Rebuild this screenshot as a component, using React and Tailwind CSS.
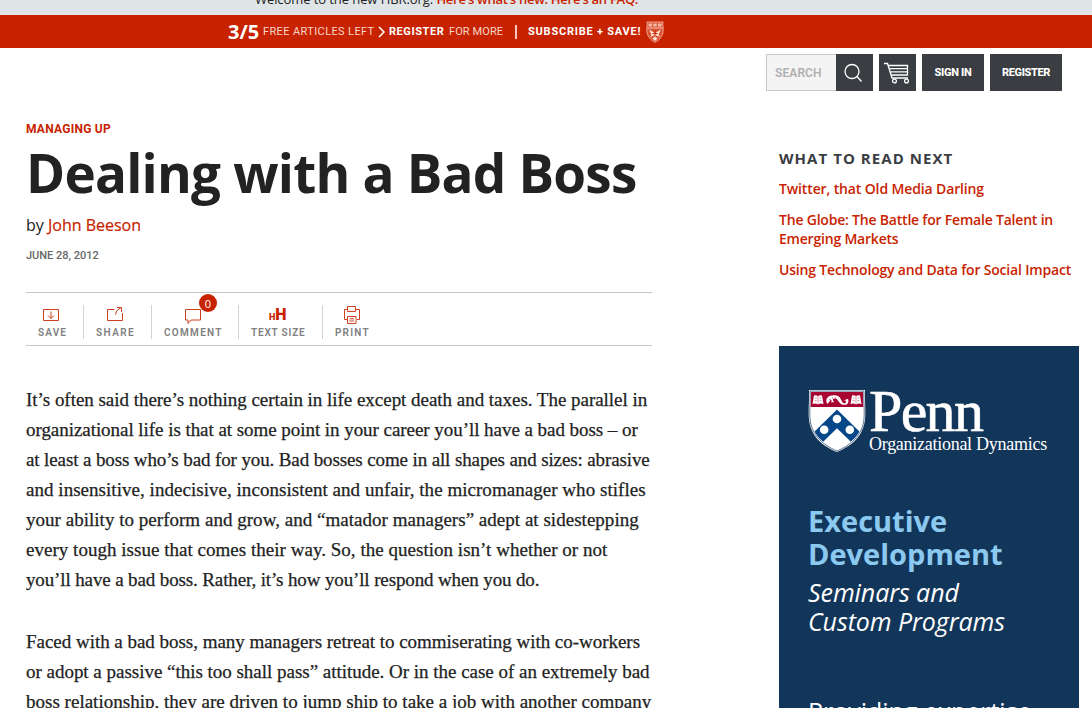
import React from "react";

const sans = "font-['Open_Sans',sans-serif]";
const label = "font-['Roboto',sans-serif]";

function Crest() {
  return (
    <svg width="18" height="22" viewBox="0 0 18 22" fill="none" className="mb-[2px] shrink-0">
      <path d="M1 1h16c-.5 3 .3 5 .2 8.500-.4 5.500-3.500 9.500-8.200 11.800C4.300 19 1.200 15 .8 9.500.7 6 1.500 4 1 1Z" fill="#d9512f" stroke="#f0a896" strokeWidth="1" />
      <path d="M2.500 2.500h3.600v3H2.500zM7.200 2.500h3.600v3H7.200zM11.900 2.500h3.600v3h-3.600z" fill="#f3b7a6" />
      <path d="M1.500 7h15" stroke="#f6c4b6" />
      <path d="M3 8.500 9 12l6-3.500-2.500 5L14 16l-5-2-5 2 1.500-2.500Z" fill="#fbe3dc" />
      <path d="m6.500 17.500 2.500-2 2.500 2L9 20Z" fill="#fbe3dc" />
      <path d="M9 9.500v5M6.500 12.500h5" stroke="#c82300" />
    </svg>
  );
}

function PennShield() {
  return (
    <svg width="58" height="64" viewBox="0 0 58 64" className="shrink-0">
      <defs>
        <clipPath id="shield">
          <path d="M3 3h52c-.3 8 .6 15 .4 23C55 44 44 54 29 61 14 54 3 44 2.600 26 2.400 18 3.300 11 3 3Z" />
        </clipPath>
      </defs>
      <path d="M1 1h56c-.4 9 .5 16 .3 25C57 45 46 56 29 63 12 56 1 45 .7 26 .5 17 1.400 10 1 1Z" fill="#fff" />
      <path d="M2.100 2.100h53.800c-.4 9 .5 16 .3 24C56 44.500 45 55 29 62 13 55 2 44.500 1.800 26 1.600 18 2.500 10 2.100 2.100Z" fill="none" stroke="#12365a" strokeWidth="0.700" />
      <g clipPath="url(#shield)">
        <path d="M0 0h58v18H0z" fill="#a90533" />
        <path d="M29 20.500 58 49v3L44 54 29 39.500 14 54 0 52V49Z" fill="#064789" />
        <path d="M0 49 8.500 41 17 51 0 64ZM58 49 49.500 41 41 51 58 64Z" fill="#064789" />
        <path d="M29 39.500 45 55 29 64 13 55Z" fill="#fff" />
      </g>
      <circle cx="29" cy="30" r="4.300" fill="#fff" />
      <circle cx="16.200" cy="40.700" r="4.300" fill="#fff" />
      <circle cx="41.800" cy="40.700" r="4.300" fill="#fff" />
      {[4.5, 42.5].map((x) => (
        <g key={x} transform={`translate(${x} 6)`}>
          <path d="M1.500 0.500Q4 0 5.500 1.200 7 0 9.500.500L11 9Q7.500 8 5.500 9.500 3.500 8 0 9Z" fill="#fff" />
          <path d="M5.500 1.500v7M2.500 3h2M2.200 5.500h2M6.800 3h2M6.900 5.500h2" stroke="#a90533" strokeWidth=".4" />
        </g>
      ))}
      <path d="M19.500 15c-3-4 0-8.500 4.500-8.500 6-1.500 8.500 2 9.500 5 1.500 4 5 3.500 4.500.5l-1.800-.8 3.800-1.500c1.500 4-1 6.800-5 6-5-1-4.500-6.500-8.500-6.200-2 .3-2 2-.5 3.500l-2.500.5-.5-3Z" fill="#fff" />
      <path d="m21 10 3 2M24 8l2 3M28 8l-1 3" stroke="#a90533" strokeWidth=".5" />
    </svg>
  );
}

const icon = { fill: "none", stroke: "#d0401f", strokeWidth: 1 };

const SaveIcon = () => (
  <svg width="18" height="20" viewBox="0 0 18 20" {...icon}>
    <path d="M1.500 4.500h15v11h-15zM9 6.500v7M6 10.500l3 3 3-3" />
  </svg>
);
const ShareIcon = () => (
  <svg width="18" height="20" viewBox="0 0 18 20" {...icon}>
    <path d="M8.500 4.500h-7v11h15V8M9.500 9.500 10.500 6l4.500-3.500M11 2.500h4.500V7" />
  </svg>
);
const CommentIcon = () => (
  <svg width="18" height="20" viewBox="0 0 18 20" {...icon}>
    <path d="M1.500 4.500h15v10.500H7l-3 3.500V15H1.500z" />
  </svg>
);
const PrintIcon = () => (
  <svg width="18" height="20" viewBox="0 0 18 20" {...icon}>
    <path d="M4.500 6.500v-5h8v5M4 14.500H1.500V4.500h3M12.500 4.500h4v10H14M4.500 6.500h8M4.500 11.500h8.500v7H4.500zM6.500 13.800h4.500M6.500 16h4.500" />
  </svg>
);

function Tool({ name, className, tracking, children }) {
  return (
    <div className={`flex h-[34px] flex-col pl-[12px] ${className}`}>
      <div className="flex w-fit flex-col items-center">
        {children}
        <span className={`${label} text-[10px] font-semibold leading-[16px] text-[#808080] ${tracking}`}>{name}</span>
      </div>
    </div>
  );
}

const paragraphs = [
  [
    ["It’s often said there’s nothing certain in life except death and taxes. The parallel in", "tracking-[-0.03px]"],
    ["organizational life is that at some point in your career you’ll have a bad boss – or", "tracking-[-0.05px]"],
    ["at least a boss who’s bad for you. Bad bosses come in all shapes and sizes: abrasive", "tracking-[-0.12px]"],
    ["and insensitive, indecisive, inconsistent and unfair, the micromanager who stifles", "tracking-[0.037px]"],
    ["your ability to perform and grow, and “matador managers” adept at sidestepping", "tracking-[0.025px]"],
    ["every tough issue that comes their way. So, the question isn’t whether or not", "tracking-[0.025px]"],
    ["you’ll have a bad boss. Rather, it’s how you’ll respond when you do.", "tracking-[-0.13px]"],
  ],
  [
    ["Faced with a bad boss, many managers retreat to commiserating with co-workers", "tracking-[-0.029px]"],
    ["or adopt a passive “this too shall pass” attitude. Or in the case of an extremely bad", "tracking-[-0.02px]"],
    ["boss relationship, they are driven to jump ship to take a job with another company", "tracking-[0.012px]"],
  ],
];

export default function App() {
  return (
    <div className={`flex h-[708px] w-[1092px] flex-col overflow-hidden bg-white text-[#222] ${sans}`}>
      <div className="flex h-[15px] shrink-0 items-end overflow-hidden bg-[#dfe4e7] pl-[255px]">
        <p className="mb-[7px] whitespace-nowrap text-[13px] font-medium leading-[18px] tracking-[-0.08px]">
          Welcome to the new HBR.org.{" "}
          <a className="font-semibold tracking-[-0.27px] text-[#c82300]">Here’s what’s new. Here’s an FAQ.</a>
        </p>
      </div>

      <div className={`flex h-[33px] shrink-0 items-center whitespace-nowrap bg-[#c82300] pl-[228px] pt-[2px] text-[11px] text-white ${label}`}>
        <span className={`${sans} mb-[2px] w-[35px] text-[20px] font-bold leading-[32px]`}>3/5</span>
        <span className="w-[115px] tracking-[0.38px] text-[#f8d5cb]">FREE ARTICLES LEFT</span>
        <svg width="8" height="12" viewBox="0 0 8 12" className="mb-[2px] mr-[3px]" fill="none" stroke="#fff" strokeWidth="1.500">
          <path d="m1 1 5 5-5 5" />
        </svg>
        <span className="w-[60px] font-bold tracking-[0.57px]">REGISTER</span>
        <span className="w-[66px] tracking-[0.1px] text-[#f8d5cb]">FOR MORE</span>
        <span className="mb-[2px] h-[14px] w-[13px] border-l-2 border-[#f5cabd]" />
        <span className="w-[118px] font-bold tracking-[0.78px]">SUBSCRIBE + SAVE!</span>
        <Crest />
      </div>

      <div className={`flex h-[43px] shrink-0 justify-end pr-[30px] pt-[6px] text-[11px] font-extrabold text-white ${label}`}>
        <div className="flex h-[37px] w-[70px] items-center border border-r-0 border-[#c9c9c9] bg-[#f4f4f4] pl-[8px] text-[12px] font-semibold tracking-[0.1px] text-[#b0b0b0]">SEARCH</div>
        <div className="flex h-[37px] w-[37px] items-center justify-center bg-[#3a3d42] pr-[2px]">
          <svg width="20" height="20" viewBox="0 0 20 20" fill="none" stroke="#fff" strokeWidth="1.300">
            <circle cx="8" cy="8.500" r="7" />
            <path d="m13 13.500 4.500 5" />
          </svg>
        </div>
        <div className="ml-[6px] flex h-[37px] w-[37px] items-center justify-center bg-[#3a3d42] pr-[1px]">
          <svg width="26" height="22" viewBox="0 0 26 22" fill="none" stroke="#fff" strokeWidth="1.300">
            <path d="M0 1.500h3.500l4.500 14.500h16M4.500 3.500h19v9.500H7.500M6 6.700h17.500M6.500 9.900h17" />
            <circle cx="10.500" cy="19" r="1.900" />
            <circle cx="22.500" cy="19" r="1.900" />
          </svg>
        </div>
        <div className="ml-[6px] flex h-[37px] w-[62px] items-center justify-center bg-[#3a3d42] pt-[2px] tracking-[-0.28px]">SIGN IN</div>
        <div className="ml-[6px] flex h-[37px] w-[72px] items-center justify-center bg-[#3a3d42] pt-[2px] tracking-[-0.4px]">REGISTER</div>
      </div>

      <div className="flex whitespace-nowrap pl-[26px]">
        <main className="w-[626px] pt-[30px]">
          <div className={`text-[12px] font-bold leading-[16px] tracking-[0.26px] text-[#c82300] ${label}`}>MANAGING UP</div>
          <h1 className="mt-[6px] text-[53px] font-bold leading-[60px] tracking-[-0.78px]">Dealing with a Bad Boss</h1>
          <div className="mt-[10px] text-[16px] font-medium leading-[24px]">
            by <a className="text-[#c82300] [-webkit-text-stroke:0.2px_#c82300]">John Beeson</a>
          </div>
          <div className={`mt-[11px] text-[11px] font-medium leading-[16px] text-[#666] ${label}`}>JUNE 28, 2012</div>

          <div className="mt-[28px] flex h-[54px] border-y border-[#c4c4c4] pt-[12px]">
            <Tool name="SAVE" className="w-[58px] border-r border-[#d2d2d2]" tracking="mr-[-1px] tracking-[1.15px]">
              <div className="pr-[2px]"><SaveIcon /></div>
            </Tool>
            <Tool name="SHARE" className="w-[68px] border-r border-[#d2d2d2]" tracking="mr-[-1px] tracking-[1.45px]">
              <div className="pr-[1px]"><ShareIcon /></div>
            </Tool>
            <Tool name="COMMENT" className="w-[87px] border-r border-[#d2d2d2]" tracking="mr-[-1px] tracking-[1.3px]">
              <div className="relative">
                <CommentIcon />
                <span className="absolute left-[15px] top-[-11px] flex h-[18px] w-[18px] items-center justify-center rounded-full bg-[#c82300] text-[11px] leading-none text-white">0</span>
              </div>
            </Tool>
            <Tool name="TEXT SIZE" className="w-[84px] border-r border-[#d2d2d2]" tracking="mr-[-1px] tracking-[0.82px]">
              <span className={`flex h-[20px] items-baseline font-black leading-[20px] text-[#c82300] ${label}`}>
                <span className="text-[9px]">H</span>
                <span className="text-[16px]">H</span>
              </span>
            </Tool>
            <Tool name="PRINT" className="" tracking="mr-[-1px] tracking-[1.2px]"><PrintIcon /></Tool>
          </div>

          <article className="mt-[39px] flex flex-col gap-[32px] font-['Liberation_Serif',serif] text-[19px] leading-[30px] [-webkit-text-stroke:0.25px_#222]">
            {paragraphs.map((lines, i) => (
              <p key={i}>
                {lines.map(([text, tracking]) => (
                  <span key={text} className={`block ${tracking}`}>{text}</span>
                ))}
              </p>
            ))}
          </article>
        </main>

        <aside className="ml-[127px] w-[300px] pt-[57px]">
          <h2 className="text-[15px] font-bold leading-[20px] tracking-[1.05px] text-[#3a3d42]">WHAT TO READ NEXT</h2>
          <ul className="mt-[11px] flex flex-col gap-[12px] text-[14px] font-semibold leading-[19px] text-[#c82300]">
            <li className="tracking-[-0.132px]">Twitter, that Old Media Darling</li>
            <li className="tracking-[-0.206px]">
              The Globe: The Battle for Female Talent in
              <br />
              Emerging Markets
            </li>
            <li className="tracking-[-0.187px]">Using Technology and Data for Social Impact</li>
          </ul>

          <div className="mt-[67px] h-[400px] bg-[#12365a] pl-[29px] pt-[43px] text-white">
            <div className="flex h-[64px] font-['Liberation_Serif',serif]">
              <PennShield />
              <div className="ml-[3px]">
                <div className="mt-[-3px] h-[48px] text-[60px] leading-[51px] tracking-[-1.7px] [-webkit-text-stroke:0.6px_#fff]">Penn</div>
                <div className="text-[18px] leading-[20px] tracking-[-0.27px]">Organizational Dynamics</div>
              </div>
            </div>
            <div className="mt-[51px] text-[29px] font-bold leading-[33px] text-[#8cc9f0]">
              Executive
              <br />
              Development
            </div>
            <div className="mt-[8px] text-[25px] italic leading-[29px] tracking-[-0.08px]">
              Seminars and
              <br />
              Custom Programs
            </div>
            <div className="mt-[58px] text-[25px] leading-[34px] tracking-[-0.02px]">Providing expertise</div>
          </div>
        </aside>
      </div>
    </div>
  );
}
